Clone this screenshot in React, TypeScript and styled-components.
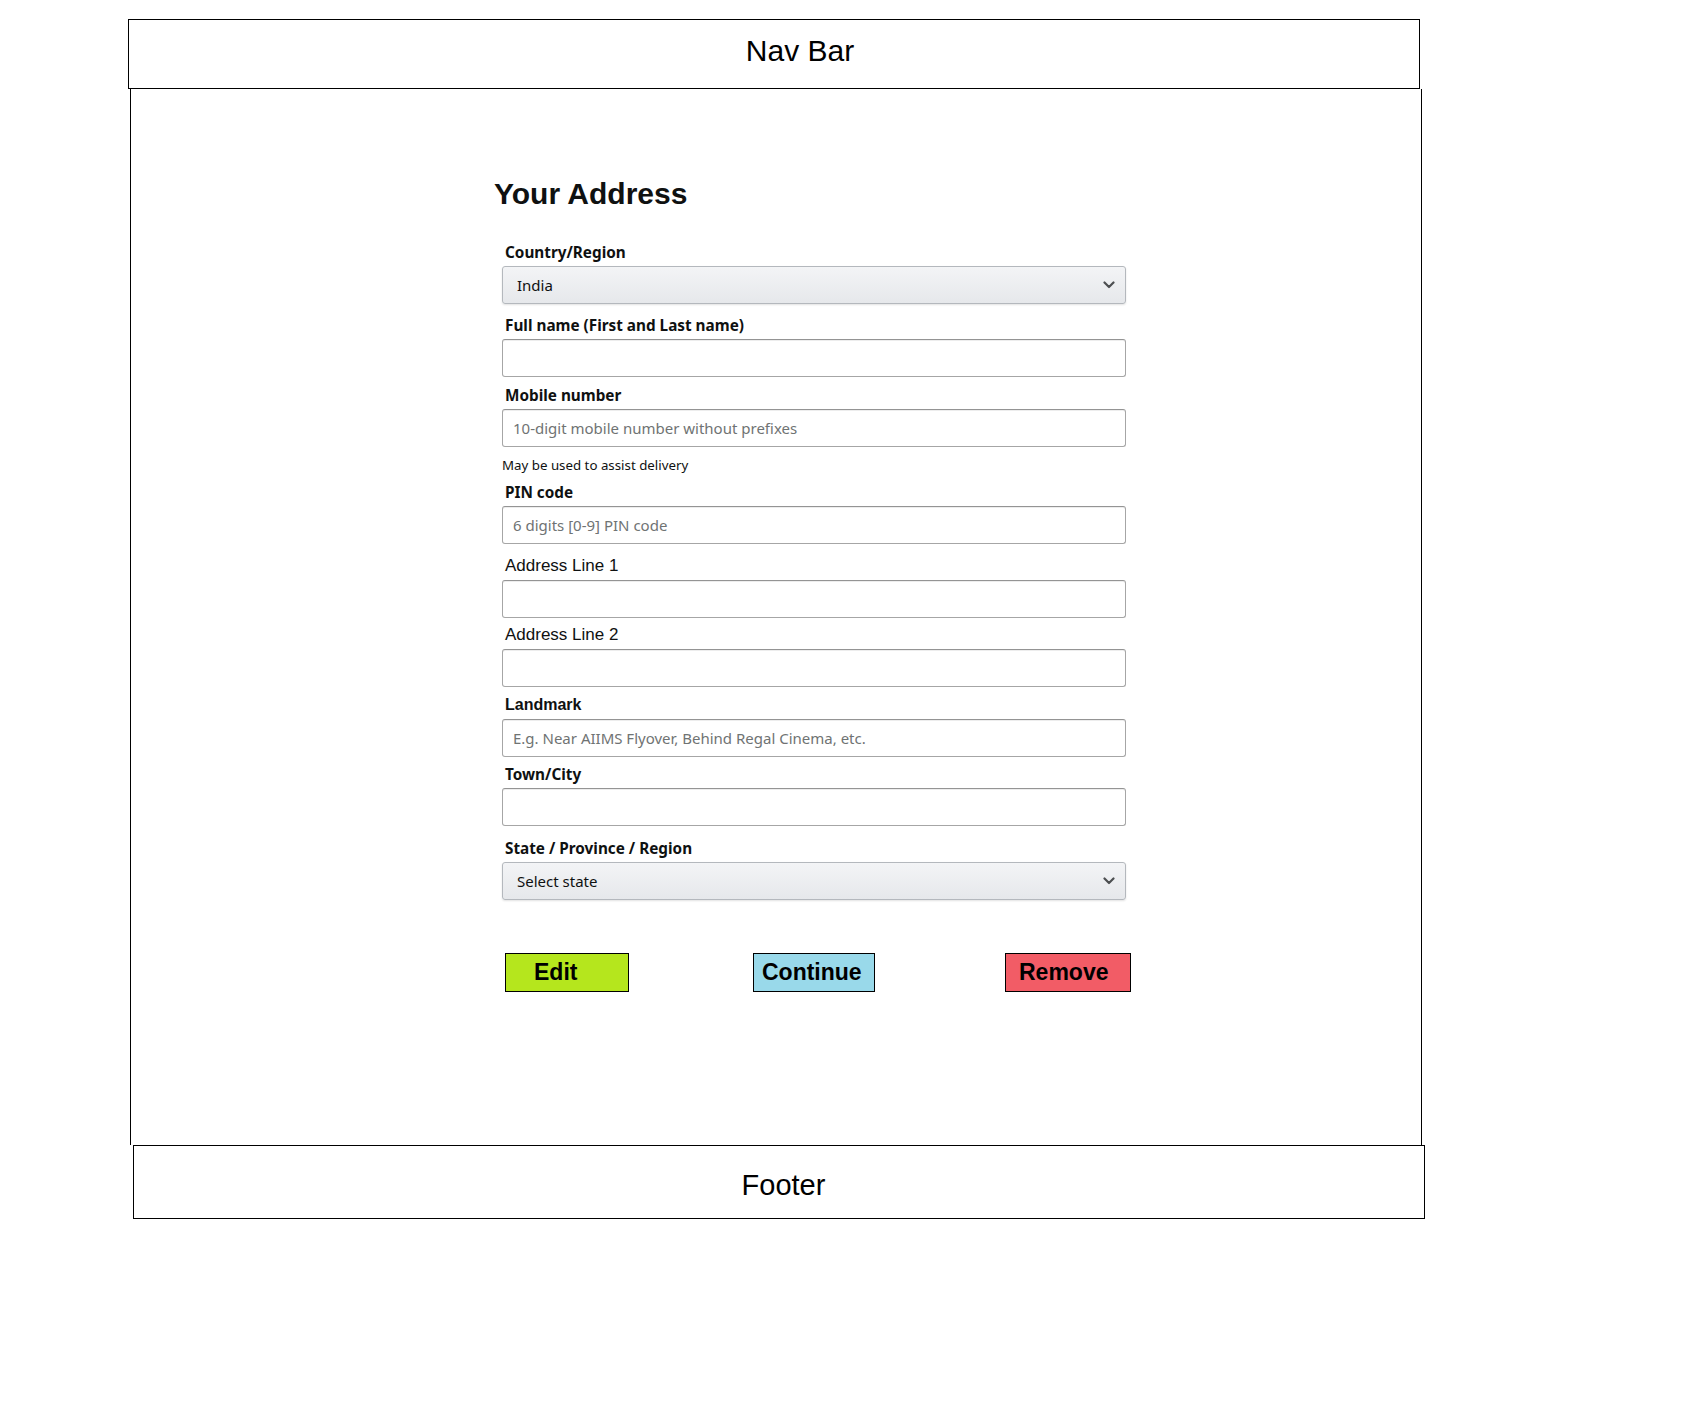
import React from "react";
import styled, { createGlobalStyle } from "styled-components";

const GlobalStyle = createGlobalStyle`
  html, body {
    margin: 0;
    padding: 0;
    background: #ffffff;
  }
  body {
    font-family: "Liberation Sans", Arial, sans-serif;
    color: #000;
  }
  * { box-sizing: border-box; }
`;

const Page = styled.div`
  width: 1700px;
  min-height: 1411px;
  padding-top: 19px;
  display: flex;
  flex-direction: column;
`;

const NavBar = styled.header`
  margin-left: 128px;
  width: 1292px;
  height: 70px;
  border: 1px solid #000;
  display: flex;
  align-items: center;
  justify-content: center;
  padding: 0 0 6px 52px;
  font-family: "Liberation Sans", Arial, sans-serif;
  font-size: 30px;
  color: #000;
`;

const Body = styled.main`
  margin-left: 130px;
  width: 1292px;
  height: 1056px;
  border-left: 1px solid #000;
  border-right: 1px solid #000;
  padding-top: 88px;
  padding-left: 371px;
`;

const Footer = styled.footer`
  margin-left: 133px;
  width: 1292px;
  height: 74px;
  border: 1px solid #000;
  display: flex;
  align-items: center;
  justify-content: center;
  padding: 7px 0 0 9px;
  font-family: "Liberation Sans", Arial, sans-serif;
  font-size: 29px;
  color: #000;
`;

const Form = styled.form`
  width: 624px;
  display: flex;
  flex-direction: column;
`;

const Heading = styled.h1`
  margin: 0 0 0 -8px;
  height: 34px;
  line-height: 34px;
  font-family: "Liberation Sans", Arial, sans-serif;
  font-weight: 700;
  font-size: 30px;
  color: #0f1111;
`;

const Field = styled.div<{ $top: number }>`
  margin-top: ${(p) => p.$top}px;
  display: flex;
  flex-direction: column;
`;

type LabelKind = "ember" | "arial" | "arialBold";

const Label = styled.label<{ $kind?: LabelKind }>`
  display: block;
  height: 18px;
  line-height: 18px;
  margin: 0 0 5px 3px;
  color: #0f1111;
  white-space: nowrap;
  font-family: ${(p) =>
    p.$kind === "ember" || !p.$kind
      ? `"Noto Sans", "Open Sans", sans-serif`
      : `"Liberation Sans", Arial, sans-serif`};
  font-weight: ${(p) => (p.$kind === "arial" ? 400 : 700)};
  font-size: ${(p) =>
    p.$kind === "arial" ? "17px" : p.$kind === "arialBold" ? "16px" : "15.3px"};
`;

const TextInput = styled.input`
  display: block;
  width: 624px;
  height: 38px;
  margin: 0;
  padding: 0 10px;
  border: 1px solid #a6a6a6;
  border-top-color: #949494;
  border-radius: 3px;
  background: #fff;
  box-shadow: 0 1px 0 rgba(255, 255, 255, 0.5), 0 1px 0 rgba(0, 0, 0, 0.07) inset;
  font-family: "Noto Sans", "Open Sans", sans-serif;
  font-size: 15px;
  color: #0f1111;
  outline: none;
  &::placeholder {
    color: #6f7373;
    opacity: 1;
  }
`;

const SelectBox = styled.div`
  width: 624px;
  height: 38px;
  display: flex;
  align-items: center;
  justify-content: space-between;
  padding: 0 10px 0 14px;
  border: 1px solid #b4b8bd;
  border-radius: 3px;
  background: linear-gradient(to bottom, #f3f4f6, #e6e8eb);
  box-shadow: 0 1px 2px rgba(15, 17, 17, 0.12);
  font-family: "Noto Sans", "Open Sans", sans-serif;
  font-size: 15px;
  color: #0f1111;
`;

const Helper = styled.div`
  margin-top: 10px;
  height: 16px;
  line-height: 16px;
  font-family: "Noto Sans", "Open Sans", sans-serif;
  font-size: 13.3px;
  color: #0f1111;
`;

const ButtonRow = styled.div`
  margin-top: 53px;
  margin-left: 3px;
  display: flex;
  align-items: center;
`;

const ActionButton = styled.button<{ $bg: string; $w: number; $pl: number; $ml: number }>`
  flex: 0 0 auto;
  width: ${(p) => p.$w}px;
  height: 39px;
  margin: 0 0 0 ${(p) => p.$ml}px;
  padding: 0 0 0 ${(p) => p.$pl}px;
  text-align: left;
  border: 1px solid #000;
  border-radius: 0;
  background: ${(p) => p.$bg};
  font-family: "Liberation Sans", Arial, sans-serif;
  font-weight: 700;
  font-size: 23px;
  color: #000;
  cursor: pointer;
`;

const Chevron = () => (
  <svg width="12" height="8" viewBox="0 0 12 8" aria-hidden="true">
    <path d="M1.5 1.5 L6 6 L10.5 1.5" fill="none" stroke="#4d4f51" strokeWidth="2.2" strokeLinecap="round" strokeLinejoin="round" />
  </svg>
);

export default function App() {
  return (
    <>
      <GlobalStyle />
      <Page>
        <NavBar>Nav Bar</NavBar>
        <Body>
          <Form onSubmit={(e) => e.preventDefault()}>
            <Heading>Your Address</Heading>

            <Field $top={32}>
              <Label>Country/Region</Label>
              <SelectBox>
                <span>India</span>
                <Chevron />
              </SelectBox>
            </Field>

            <Field $top={12}>
              <Label>Full name (First and Last name)</Label>
              <TextInput type="text" />
            </Field>

            <Field $top={9}>
              <Label>Mobile number</Label>
              <TextInput type="text" placeholder="10-digit mobile number without prefixes" />
            </Field>
            <Helper>May be used to assist delivery</Helper>

            <Field $top={10}>
              <Label>PIN code</Label>
              <TextInput type="text" placeholder="6 digits [0-9] PIN code" />
            </Field>

            <Field $top={13}>
              <Label $kind="arial">Address Line 1</Label>
              <TextInput type="text" />
            </Field>

            <Field $top={8}>
              <Label $kind="arial">Address Line 2</Label>
              <TextInput type="text" />
            </Field>

            <Field $top={9}>
              <Label $kind="arialBold">Landmark</Label>
              <TextInput type="text" placeholder="E.g. Near AIIMS Flyover, Behind Regal Cinema, etc." />
            </Field>

            <Field $top={8}>
              <Label>Town/City</Label>
              <TextInput type="text" />
            </Field>

            <Field $top={13}>
              <Label>State / Province / Region</Label>
              <SelectBox>
                <span>Select state</span>
                <Chevron />
              </SelectBox>
            </Field>

            <ButtonRow>
              <ActionButton type="button" $bg="#b5e61d" $w={124} $pl={28} $ml={0}>
                Edit
              </ActionButton>
              <ActionButton type="button" $bg="#99d9ea" $w={122} $pl={8} $ml={124}>
                Continue
              </ActionButton>
              <ActionButton type="button" $bg="#f25c66" $w={126} $pl={13} $ml={130}>
                Remove
              </ActionButton>
            </ButtonRow>
          </Form>
        </Body>
        <Footer>Footer</Footer>
      </Page>
    </>
  );
}
